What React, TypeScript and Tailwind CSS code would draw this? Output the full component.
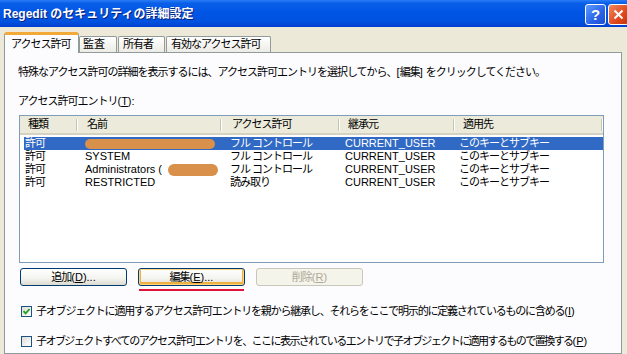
import React from 'react'

const cols = [
  { w: 'w-[58px]', head: '種類', hp: 'pl-[8px]' },
  { w: 'w-[144px]', head: '名前', hp: 'pl-[9px]' },
  { w: 'w-[118px]', head: 'アクセス許可', hp: 'pl-[10px]' },
  { w: 'w-[115px]', head: '継承元', hp: 'pl-[8px]' },
  { w: 'w-[148px]', head: '適用先', hp: 'pl-[8px]' },
]

const rows = [
  { type: '許可', name: '', blob: 'full', perm: 'フル コントロール', from: 'CURRENT_USER', to: 'このキーとサブキー', sel: true },
  { type: '許可', name: 'SYSTEM', blob: '', perm: 'フル コントロール', from: 'CURRENT_USER', to: 'このキーとサブキー', sel: false },
  { type: '許可', name: 'Administrators (', blob: 'part', perm: 'フル コントロール', from: 'CURRENT_USER', to: 'このキーとサブキー', sel: false },
  { type: '許可', name: 'RESTRICTED', blob: '', perm: '読み取り', from: 'CURRENT_USER', to: 'このキーとサブキー', sel: false },
]

// access key like (D) with the letter underlined, latin spacing kept normal
function Key({ k }: { k: string }) {
  return (
    <span className="tracking-normal">
      (<span className="underline">{k}</span>)
    </span>
  )
}

function XpButton({ children, focus, disabled }: { children: React.ReactNode; focus?: boolean; disabled?: boolean }) {
  const border = disabled ? 'border-[#c9c7ba]' : 'border-[#003c74]'
  return (
    <div className={`w-[107px] h-[18px] rounded-[3px] border ${border} flex items-center justify-center text-[11px] tracking-[-1px] ${disabled ? 'text-[#aca899] bg-[#f5f4ea]' : 'text-black bg-[linear-gradient(to_bottom,#ffffff,#f3f3ef_60%,#dcdad0)]'} ${focus ? 'shadow-[inset_0_0_0_1px_#fbd580,inset_0_-1px_0_2px_#f0b040]' : ''}`}>
      {children}
    </div>
  )
}

function CheckBox({ checked }: { checked?: boolean }) {
  return (
    <div className="w-[11px] h-[11px] border border-[#1c5180] bg-[linear-gradient(135deg,#dcdcd7,#ffffff)] flex items-center justify-center shrink-0">
      {checked && (
        <svg width="9" height="9" viewBox="0 0 9 9">
          <path d="M1.5 4.2 L3.6 6.4 L7.6 2" fill="none" stroke="#21a121" strokeWidth="1.8" />
        </svg>
      )}
    </div>
  )
}

export default function App() {
  return (
    <div className="w-[627px] h-[354px] overflow-hidden bg-[#ece9d8] flex flex-col font-['Liberation_Sans','Noto_Sans_CJK_JP',sans-serif] text-black">
      {/* title bar */}
      <div className="h-[27px] shrink-0 flex items-center justify-between pl-[3px] bg-[linear-gradient(to_bottom,#2b7cf7_0%,#0a5fe8_12%,#0055e5_45%,#0052df_80%,#003fcf_100%)]">
        <span className="text-white font-bold text-[12px] [text-shadow:1px_1px_0_#0a1f7a]">Regedit のセキュリティの詳細設定</span>
        <div className="flex items-center gap-[2px] pt-[1px]">
          <div className="w-[21px] h-[21px] rounded-[3px] border border-white bg-[linear-gradient(135deg,#5e9cff,#2a62e8_60%,#1b4fd0)] flex items-center justify-center text-white text-[15px] font-bold leading-none">?</div>
          <div className="w-[21px] h-[21px] -mr-[2px] rounded-[3px] border border-white bg-[linear-gradient(135deg,#f08a62,#e0481c_60%,#c33510)] flex items-center justify-center">
            <svg width="11" height="11" viewBox="0 0 11 11">
              <path d="M1.5 1.5 L9.5 9.5 M9.5 1.5 L1.5 9.5" stroke="white" strokeWidth="2" />
            </svg>
          </div>
        </div>
      </div>

      {/* tabs */}
      <div className="h-[20px] mt-[5px] pl-[4px] flex items-end text-[11px] tracking-[-1px] relative z-10">
        <div className="w-[75px] h-[21px] -mb-px bg-[#fcfcfe] border-x border-[#919b9c] rounded-t-[3px] border-t-[3px] border-t-[#f2a93a] flex items-center pl-[6px]">アクセス許可</div>
        <div className="w-[38px] h-[16px] border border-b-0 border-[#919b9c] rounded-t-[2px] bg-[linear-gradient(to_bottom,#ffffff,#ecebe5)] flex items-center pl-[3px] tracking-normal">監査</div>
        <div className="w-[47px] h-[16px] ml-[1px] border border-b-0 border-[#919b9c] rounded-t-[2px] bg-[linear-gradient(to_bottom,#ffffff,#ecebe5)] flex items-center pl-[4px]">所有者</div>
        <div className="w-[105px] h-[16px] ml-[1px] border border-b-0 border-[#919b9c] rounded-t-[2px] bg-[linear-gradient(to_bottom,#ffffff,#ecebe5)] flex items-center pl-[4px]">有効なアクセス許可</div>
      </div>

      {/* panel */}
      <div className="ml-[4px] w-[618px] flex-1 border border-[#919b9c] bg-[#fcfcfe] flex flex-col pl-[13px] text-[11px] tracking-[-1px]">
        <div className="mt-[12px] h-[14px] leading-[14px] whitespace-nowrap">特殊なアクセス許可の詳細を表示するには、アクセス許可エントリを選択してから、<span className="tracking-normal">[</span>編集<span className="tracking-normal">] </span>をクリックしてください。</div>
        <div className="mt-[15px] h-[14px] leading-[14px]">アクセス許可エントリ<Key k="T" /><span className="tracking-normal">:</span></div>

        {/* list */}
        <div className="mt-[7px] ml-[1px] w-[585px] h-[148px] border border-[#7f9db9] bg-white flex flex-col">
          <div className="h-[19px] flex bg-[#ebeadb] border-b-[2px] border-[#d6d2c2]">
            {cols.map((c, i) => (
              <div key={i} className={`${c.w} flex items-center justify-between ${c.hp}`}>
                <span>{c.head}</span>
                <div className="flex h-[12px]">
                  <div className="w-px bg-[#c7c5b2]" />
                  <div className="w-px bg-white" />
                </div>
              </div>
            ))}
          </div>
          <div className="mt-[2px] flex flex-col">
            {rows.map((r, i) => (
              <div key={i} className={`ml-[4px] h-[13px] leading-[13px] flex whitespace-nowrap ${r.sel ? 'bg-[#316ac5] text-white' : ''}`}>
                <div className="w-[54px] pl-[1px]">{r.type}</div>
                <div className="w-[144px] pl-[7px] flex items-center tracking-normal">
                  {r.name}
                  {r.blob === 'full' && <span className="w-[130px] h-[10px] rounded-full bg-[#d8904a]" />}
                  {r.blob === 'part' && <span className="ml-[6px] w-[50px] h-[12px] rounded-full bg-[#d8904a]" />}
                </div>
                <div className="w-[118px] pl-[8px]">{r.perm}</div>
                <div className="w-[115px] pl-[5px] tracking-normal">{r.from}</div>
                <div className="w-[143px] pl-[4px]">{r.to}</div>
              </div>
            ))}
          </div>
        </div>

        {/* buttons */}
        <div className="mt-[5px] ml-[2px] flex gap-[11px]">
          <XpButton>追加<Key k="D" /><span className="tracking-normal">...</span></XpButton>
          <XpButton focus>編集<Key k="E" /><span className="tracking-normal">...</span></XpButton>
          <XpButton disabled>削除<Key k="R" /></XpButton>
        </div>
        <div className="mt-[3px] ml-[121px] w-[105px] h-[2px] bg-[#e0123a]" />

        <div className="mt-[13px] ml-[3px] h-[14px] flex items-center gap-[4px] whitespace-nowrap">
          <CheckBox checked />
          <span className="tracking-[-1.2px]">子オブジェクトに適用するアクセス許可エントリを親から継承し、それらをここで明示的に定義されているものに含める<Key k="I" /></span>
        </div>
        <div className="mt-[16px] ml-[3px] h-[14px] flex items-center gap-[4px] whitespace-nowrap">
          <CheckBox />
          <span className="tracking-[-1.55px]">子オブジェクトすべてのアクセス許可エントリを、ここに表示されているエントリで子オブジェクトに適用するもので置換する<Key k="P" /></span>
        </div>
      </div>
    </div>
  )
}
